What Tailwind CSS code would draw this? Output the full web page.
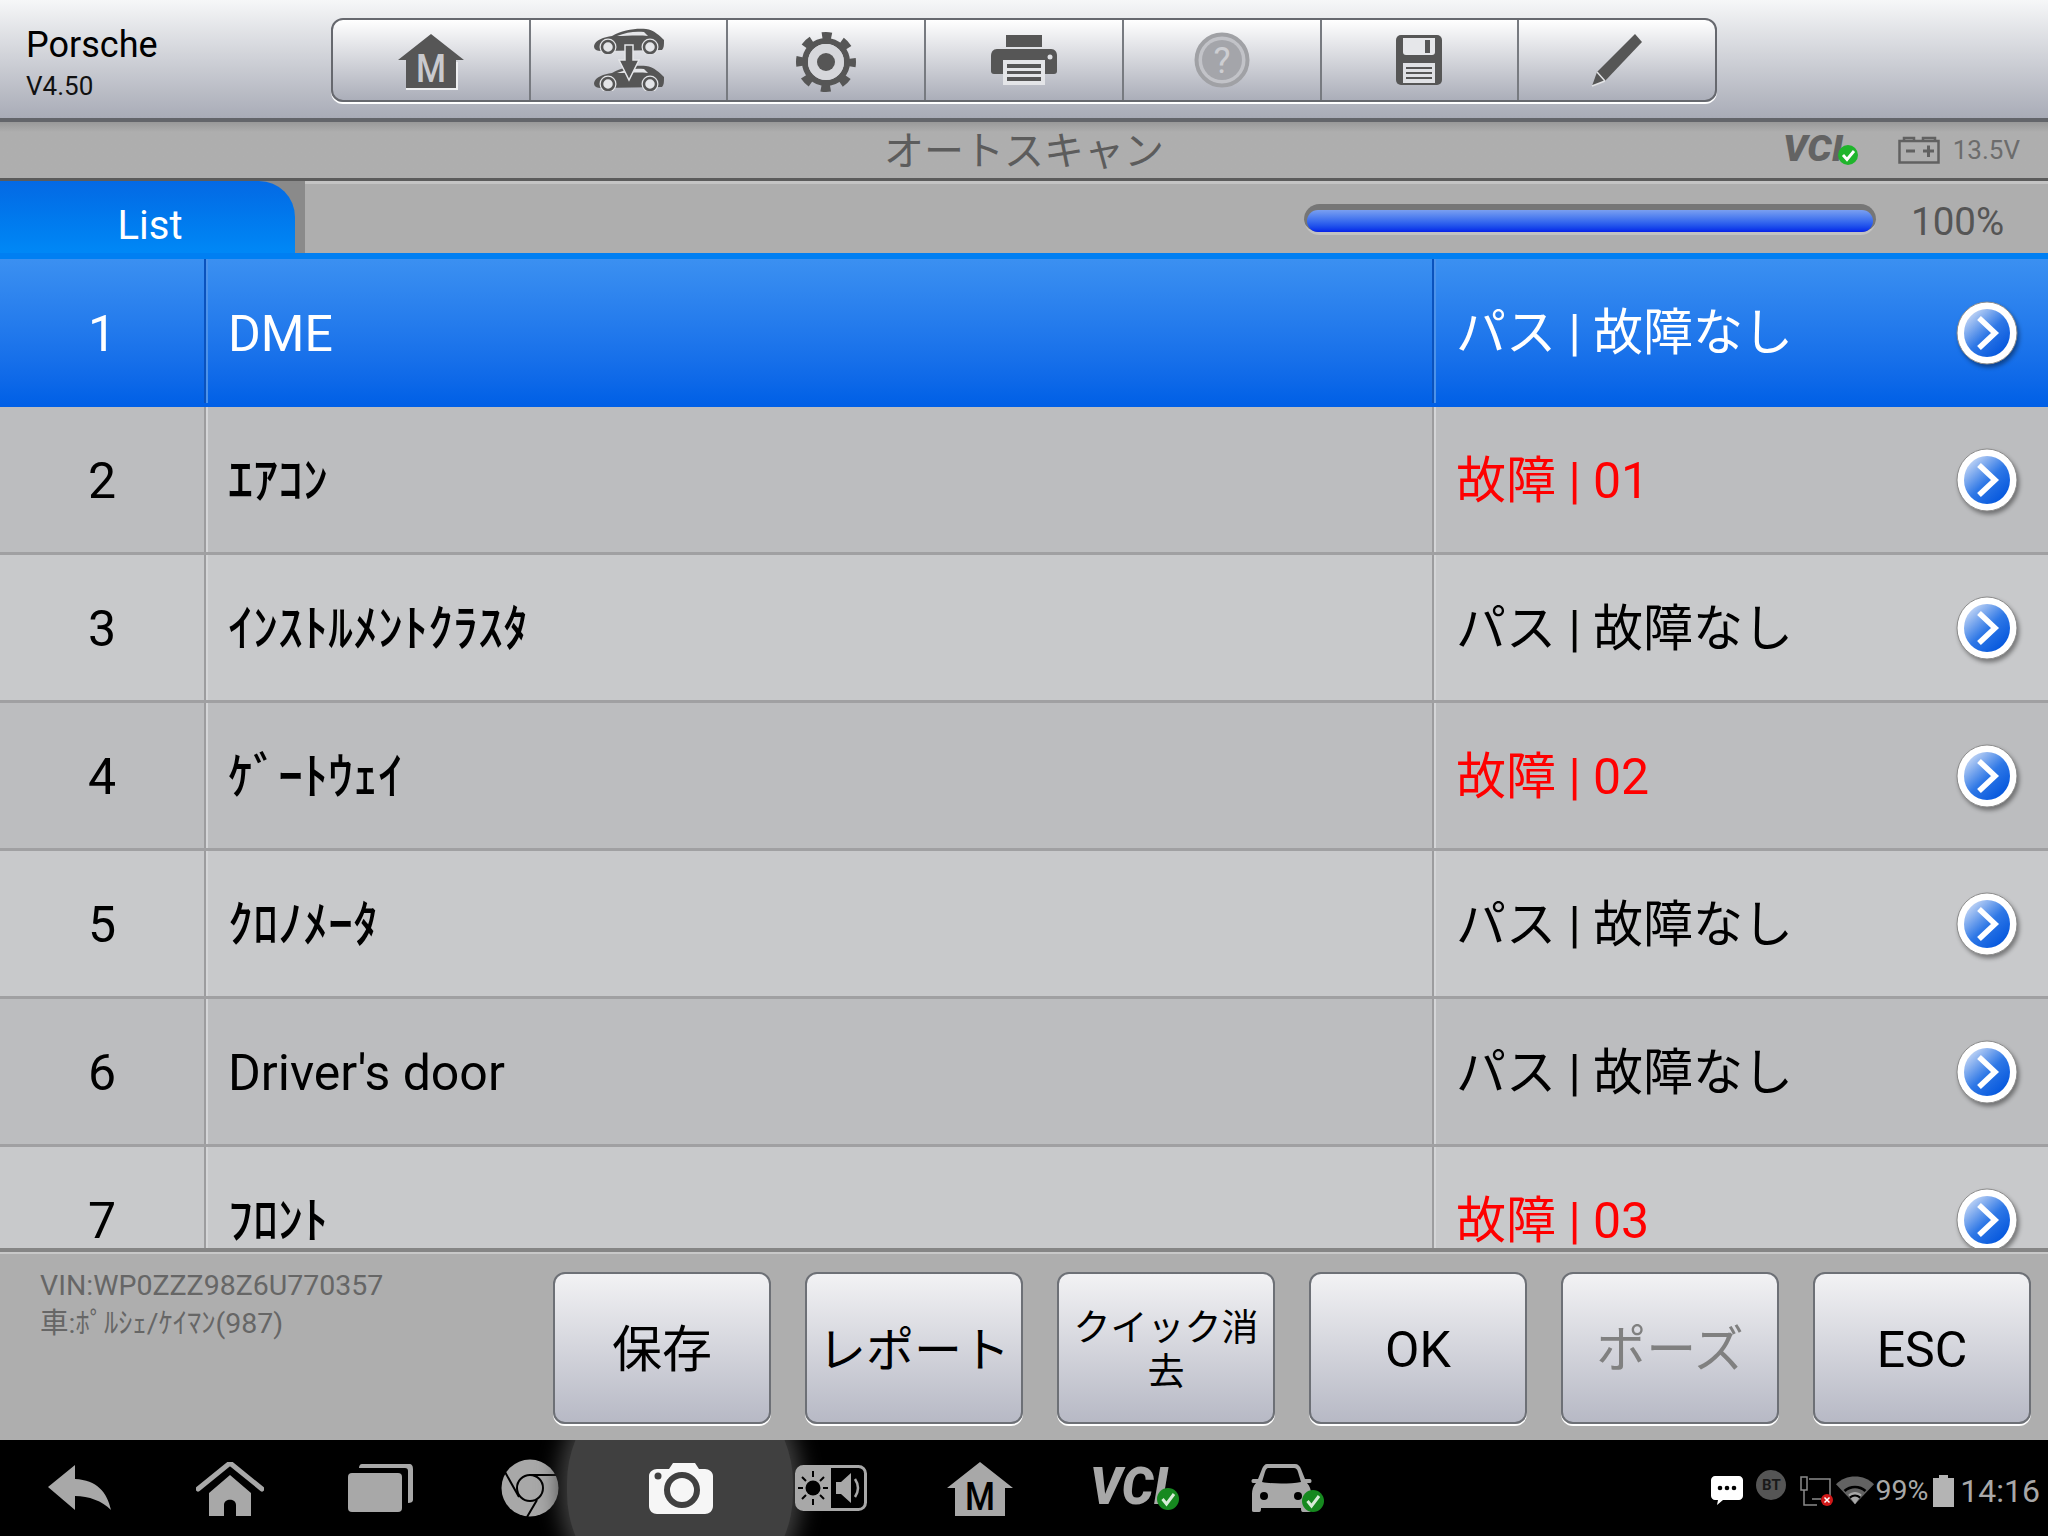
<!DOCTYPE html>
<html lang="ja">
<head>
    <meta charset="UTF-8">
    <meta name="viewport" content="width=device-width, initial-scale=1.0">
    <title>オートスキャン</title>
    <script src="https://cdn.jsdelivr.net/npm/@tailwindcss/browser@4"></script>
</head>
<body class="bg-black">
    <svg width="0" height="0" class="block h-0 w-0">
        <defs>
            <linearGradient id="chev" x1="0.1" y1="0.1" x2="0.8" y2="0.9">
                <stop offset="0" stop-color="#c6d8f6"/>
                <stop offset="0.55" stop-color="#2f78e6"/>
                <stop offset="1" stop-color="#0759de"/>
            </linearGradient>
            <symbol id="go" viewBox="0 0 62 64">
                <ellipse cx="31" cy="32" rx="30" ry="31" fill="#fff" stroke="#8a8a8a" stroke-width="1"/>
                <ellipse cx="31" cy="32" rx="23" ry="24" fill="url(#chev)"/>
                <path d="M23 17 L39 32 L23 47" fill="none" stroke="#fff" stroke-width="5.5"/>
            </symbol>
            <symbol id="minicar" viewBox="0 0 70 26">
                <path d="M0 18 C1 12 10 9 18 8 C28 2 42 0 52 1 C60 2 66 8 70 12 C70 17 70 20 68 22 L8 23 C3 23 0 22 0 18 Z" fill="#565656"/>
                <path d="M23 8 C32 4 42 3 50 4 L54 8 C44 7 32 8 23 8 Z" fill="#e4e5e8"/>
                <circle cx="14" cy="19" r="8.5" fill="#e4e5e8"/>
                <circle cx="14" cy="19" r="6" fill="#e4e5e8" stroke="#565656" stroke-width="2.5"/>
                <circle cx="56" cy="19" r="8.5" fill="#e4e5e8"/>
                <circle cx="56" cy="19" r="6" fill="#e4e5e8" stroke="#565656" stroke-width="2.5"/>
            </symbol>
        </defs>
    </svg>

    <div class="w-[2048px] h-[1536px] flex flex-col overflow-hidden font-['Roboto','Noto_Sans_CJK_JP',sans-serif]">

        <!-- Header -->
        <header class="h-[122px] shrink-0 flex bg-linear-to-b from-[#f6f7f8] to-[#a9acb7] border-b-4 border-[#63656a]">
            <div class="w-[331px] shrink-0 pl-[26px] pt-[23px]">
                <div class="text-[36px] leading-[44px] text-black">Porsche</div>
                <div class="text-[26px] leading-[38px] text-[#111]">V4.50</div>
            </div>
            <div class="mt-[18px] w-[1386px] h-[84px] flex rounded-[12px] border-2 border-[#66686e] bg-linear-to-b from-white to-[#abaeb9] shadow-[0_2px_0_#fff]">
                <div class="flex-1 flex items-center justify-center border-r-2 border-[#777a80]">
                    <svg class="mt-[4px] overflow-visible" width="66" height="56" viewBox="0 0 66 56"><path d="M33 0 L66 26 L58 26 L58 54 L8 54 L8 26 L0 26 Z" fill="#565656"/><path d="M8 54 H58 V28 H60 V56 H8 Z" fill="#eeeff1"/><text x="33" y="48" text-anchor="middle" font-family="Roboto" font-weight="500" font-size="38" textLength="30" lengthAdjust="spacingAndGlyphs" fill="#c9cace">M</text></svg>
                </div>
                <div class="flex-1 flex items-center justify-center border-r-2 border-[#777a80]">
                    <svg width="72" height="64" viewBox="0 0 72 64" fill="#565656">
                        <use href="#minicar" x="1" y="0" width="70" height="26"/>
                        <use href="#minicar" x="1" y="37" width="70" height="26"/>
                        <path d="M32 17 H40 V32 H46 L36 52 L26 32 H32 Z" stroke="#e4e5e8" stroke-width="1.5"/>
                    </svg>
                </div>
                <div class="flex-1 flex items-center justify-center border-r-2 border-[#777a80]">
                    <svg class="mt-[4px]" width="62" height="62" viewBox="0 0 62 62" fill="none">
                        <circle cx="31" cy="31" r="21" stroke="#565656" stroke-width="6"/>
                        <circle cx="31" cy="31" r="26" stroke="#565656" stroke-width="8" stroke-dasharray="9.5 10.92" stroke-dashoffset="4.75"/>
                        <circle cx="31" cy="31" r="18" fill="#d6d7db"/>
                        <circle cx="31" cy="31" r="9" fill="#565656"/>
                    </svg>
                </div>
                <div class="flex-1 flex items-center justify-center border-r-2 border-[#777a80]">
                    <svg width="68" height="52" viewBox="0 0 68 52" fill="#565656">
                        <path d="M16 1 H52 V13 H16 Z"/>
                        <path d="M7 15 H61 C65 15 67 18 67 22 V37 C67 39 66 40 64 40 H4 C2 40 1 39 1 37 V22 C1 18 3 15 7 15 Z"/>
                        <circle cx="60" cy="23" r="2.5" fill="#dfe0e4"/>
                        <path d="M13 26 H55 V51 H13 Z" fill="#e4e5e8"/>
                        <path d="M17 30 H51 V34 H17 Z M17 37 H51 V40 H17 Z M17 43 H51 V47 H17 Z"/>
                    </svg>
                </div>
                <div class="flex-1 flex items-center justify-center border-r-2 border-[#777a80]">
                    <svg class="overflow-visible" width="56" height="56" viewBox="0 0 56 56">
                        <circle cx="28" cy="28" r="25.5" fill="#c2c3c8" stroke="#a0a1a5" stroke-width="4"/>
                        <circle cx="28" cy="28" r="20" fill="#a4a5aa"/>
                        <text x="28" y="41" text-anchor="middle" font-family="Roboto" font-size="36" fill="#cdced2">?</text>
                    </svg>
                </div>
                <div class="flex-1 flex items-center justify-center border-r-2 border-[#777a80]">
                    <svg width="48" height="52" viewBox="0 0 48 52">
                        <rect x="1" y="1" width="46" height="50" rx="5" fill="#565656"/>
                        <path d="M8 4 H40 V18 C40 20 39 21 37 21 H11 C9 21 8 20 8 18 Z" fill="#e6e7ea"/>
                        <rect x="30" y="6" width="5" height="13" fill="#565656"/>
                        <rect x="8" y="29" width="32" height="20" fill="#e0e1e5"/>
                        <path d="M11 33 H37 V35 H11 Z M11 38 H37 V40 H11 Z M11 43 H37 V45 H11 Z" fill="#565656"/>
                    </svg>
                </div>
                <div class="flex-1 flex items-center justify-center">
                    <svg width="52" height="54" viewBox="0 0 52 54">
                        <path d="M44 1 L51 9 L14 48 L1 53 L6 39 Z" fill="#565656"/>
                        <path d="M6 39 L14 48 M1 53 L14 48" stroke="#e2e3e6" stroke-width="1.5"/>
                    </svg>
                </div>
            </div>
        </header>

        <!-- Title bar -->
        <div class="h-[59px] shrink-0 flex items-center pr-[28px] bg-linear-to-b from-[#999] to-[#aeaeae] to-[18%] border-b-[3px] border-[#5b5b5b]">
            <div class="w-[884px] shrink-0"></div>
            <div class="pt-[4px] text-[40px] leading-[56px] text-[#5c5c5c]">オートスキャン</div>
            <div class="flex-1"></div>
            <svg class="overflow-visible" width="74" height="30" viewBox="0 0 74 30">
                <text x="-2" y="26" font-family="Roboto" font-style="italic" font-weight="900" font-size="36" textLength="60" lengthAdjust="spacingAndGlyphs" fill="#636363">VCI</text>
                <circle cx="63" cy="20" r="10" fill="#1fb52c"/>
                <path d="M58 20 L62 24.5 L69 16" fill="none" stroke="#fff" stroke-width="2.8"/>
            </svg>
            <svg class="ml-[39px]" width="42" height="28" viewBox="0 0 42 28" fill="none" stroke="#616161" stroke-width="2.5">
                <rect x="1.5" y="5" width="39" height="21.5"/>
                <path d="M6 5 V2 H16 V5 M25 5 V2 H37 V5"/>
                <path d="M8 15 H17 M25 15 H36 M30.5 9.5 V21" stroke-width="3"/>
            </svg>
            <div class="ml-[13px] text-[26px] text-[#6c6c6c]">13.5V</div>
        </div>

        <!-- Tab row -->
        <div class="h-[78px] shrink-0 flex bg-[#aeaeae] border-b-[6px] border-[#007ff2]">
            <div class="w-[305px] shrink-0 bg-[#8a8a8a]">
                <div class="w-[295px] h-[72px] rounded-tr-[36px] bg-linear-to-b from-[#0469e4] to-[#0088f6] flex items-center justify-center pt-[18px] pl-[5px] text-[40px] text-white">List</div>
            </div>
            <div class="flex-1 border-t-[3px] border-[#c4c4c4] flex items-start pl-[999px] pt-[20px]">
                <div class="w-[572px] h-[31px] shrink-0 rounded-full bg-[#767676] border-b-[3px] border-[#c2c2c2] px-[3px] pt-[6px]">
                    <div class="h-[22px] rounded-[11px] bg-linear-to-b from-[#7a9ff0] to-[#0a1fe8]"></div>
                </div>
                <div class="ml-[35px] -mt-[4px] text-[38.5px] leading-[44px] text-[#555]">100%</div>
            </div>
        </div>

        <!-- List -->
        <main class="h-[989px] shrink-0 overflow-hidden text-[50px]">
            <div class="h-[148px] flex items-center text-white bg-linear-to-b from-[#3b90f1] to-[#005fe6]">
                <div class="w-[204px] shrink-0 pt-[3px] text-center">1</div>
                <div class="w-[4px] h-[144px] -mt-[4px] shrink-0 bg-linear-to-r from-[#0a52bd] from-50% to-[#4c92ea] to-50%"></div>
                <div class="w-[1224px] shrink-0 pt-[3px] pl-[20px]">DME</div>
                <div class="w-[4px] h-[144px] -mt-[4px] shrink-0 bg-linear-to-r from-[#0a52bd] from-50% to-[#4c92ea] to-50%"></div>
                <div class="flex-1 pt-[1px] pl-[20px]">パス | 故障なし</div>
                <svg class="mr-[30px] drop-shadow-[2px_3px_2px_rgba(0,0,0,0.4)]" width="62" height="64"><use href="#go"/></svg>
            </div>
            <div class="h-[148px] flex items-center bg-[#bcbdbf] border-b-[3px] border-[#a0a0a2] text-black">
                <div class="w-[204px] shrink-0 pt-[3px] text-center">2</div>
                <div class="w-[4px] h-full shrink-0 bg-linear-to-r from-[#9c9c9e] from-50% to-[#d4d5d7] to-50%"></div>
                <div class="w-[1224px] shrink-0 pt-[3px] pl-[20px] font-medium">ｴｱｺﾝ</div>
                <div class="w-[4px] h-full shrink-0 bg-linear-to-r from-[#9c9c9e] from-50% to-[#d4d5d7] to-50%"></div>
                <div class="flex-1 pt-[3px] pl-[20px] text-[#ff0000]">故障 | 01</div>
                <svg class="mr-[30px] drop-shadow-[2px_3px_2px_rgba(0,0,0,0.4)]" width="62" height="64"><use href="#go"/></svg>
            </div>
            <div class="h-[148px] flex items-center bg-[#c8c9cb] border-b-[3px] border-[#a0a0a2] text-black">
                <div class="w-[204px] shrink-0 pt-[3px] text-center">3</div>
                <div class="w-[4px] h-full shrink-0 bg-linear-to-r from-[#9c9c9e] from-50% to-[#d4d5d7] to-50%"></div>
                <div class="w-[1224px] shrink-0 pt-[3px] pl-[20px] font-medium">ｲﾝｽﾄﾙﾒﾝﾄｸﾗｽﾀ</div>
                <div class="w-[4px] h-full shrink-0 bg-linear-to-r from-[#9c9c9e] from-50% to-[#d4d5d7] to-50%"></div>
                <div class="flex-1 pt-[3px] pl-[20px]">パス | 故障なし</div>
                <svg class="mr-[30px] drop-shadow-[2px_3px_2px_rgba(0,0,0,0.4)]" width="62" height="64"><use href="#go"/></svg>
            </div>
            <div class="h-[148px] flex items-center bg-[#bcbdbf] border-b-[3px] border-[#a0a0a2] text-black">
                <div class="w-[204px] shrink-0 pt-[3px] text-center">4</div>
                <div class="w-[4px] h-full shrink-0 bg-linear-to-r from-[#9c9c9e] from-50% to-[#d4d5d7] to-50%"></div>
                <div class="w-[1224px] shrink-0 pt-[3px] pl-[20px] font-medium">ｹﾞｰﾄｳｪｲ</div>
                <div class="w-[4px] h-full shrink-0 bg-linear-to-r from-[#9c9c9e] from-50% to-[#d4d5d7] to-50%"></div>
                <div class="flex-1 pt-[3px] pl-[20px] text-[#ff0000]">故障 | 02</div>
                <svg class="mr-[30px] drop-shadow-[2px_3px_2px_rgba(0,0,0,0.4)]" width="62" height="64"><use href="#go"/></svg>
            </div>
            <div class="h-[148px] flex items-center bg-[#c8c9cb] border-b-[3px] border-[#a0a0a2] text-black">
                <div class="w-[204px] shrink-0 pt-[3px] text-center">5</div>
                <div class="w-[4px] h-full shrink-0 bg-linear-to-r from-[#9c9c9e] from-50% to-[#d4d5d7] to-50%"></div>
                <div class="w-[1224px] shrink-0 pt-[3px] pl-[20px] font-medium">ｸﾛﾉﾒｰﾀ</div>
                <div class="w-[4px] h-full shrink-0 bg-linear-to-r from-[#9c9c9e] from-50% to-[#d4d5d7] to-50%"></div>
                <div class="flex-1 pt-[3px] pl-[20px]">パス | 故障なし</div>
                <svg class="mr-[30px] drop-shadow-[2px_3px_2px_rgba(0,0,0,0.4)]" width="62" height="64"><use href="#go"/></svg>
            </div>
            <div class="h-[148px] flex items-center bg-[#bcbdbf] border-b-[3px] border-[#a0a0a2] text-black">
                <div class="w-[204px] shrink-0 pt-[3px] text-center">6</div>
                <div class="w-[4px] h-full shrink-0 bg-linear-to-r from-[#9c9c9e] from-50% to-[#d4d5d7] to-50%"></div>
                <div class="w-[1224px] shrink-0 pt-[3px] pl-[20px]">Driver's door</div>
                <div class="w-[4px] h-full shrink-0 bg-linear-to-r from-[#9c9c9e] from-50% to-[#d4d5d7] to-50%"></div>
                <div class="flex-1 pt-[3px] pl-[20px]">パス | 故障なし</div>
                <svg class="mr-[30px] drop-shadow-[2px_3px_2px_rgba(0,0,0,0.4)]" width="62" height="64"><use href="#go"/></svg>
            </div>
            <div class="h-[148px] flex items-center bg-[#c8c9cb] border-b-[3px] border-[#a0a0a2] text-black">
                <div class="w-[204px] shrink-0 pt-[3px] text-center">7</div>
                <div class="w-[4px] h-full shrink-0 bg-linear-to-r from-[#9c9c9e] from-50% to-[#d4d5d7] to-50%"></div>
                <div class="w-[1224px] shrink-0 pt-[3px] pl-[20px] font-medium">ﾌﾛﾝﾄ</div>
                <div class="w-[4px] h-full shrink-0 bg-linear-to-r from-[#9c9c9e] from-50% to-[#d4d5d7] to-50%"></div>
                <div class="flex-1 pt-[3px] pl-[20px] text-[#ff0000]">故障 | 03</div>
                <svg class="mr-[30px] drop-shadow-[2px_3px_2px_rgba(0,0,0,0.4)]" width="62" height="64"><use href="#go"/></svg>
            </div>
        </main>

        <!-- Footer -->
        <div class="h-[192px] shrink-0 flex bg-[#aeaeae] border-t-4 border-[#858585]">
            <div class="w-[553px] shrink-0 border-t-2 border-[#c8c8c8] pl-[40px] pt-[13px] text-[#666]">
                <div class="text-[28.5px] leading-[38px]">VIN:WP0ZZZ98Z6U770357</div>
                <div class="text-[28.5px] leading-[38px]">車:ﾎﾟﾙｼｪ/ｹｲﾏﾝ(987)</div>
            </div>
            <div class="flex-1 border-t-2 border-[#c8c8c8] pt-[18px] flex gap-[34px]">
                <button class="w-[218px] h-[152px] pt-[5px] rounded-[12px] border-2 border-[#6d7076] bg-linear-to-b from-[#f2f2f4] to-[#b7b9c5] shadow-[0_2px_0_#fff] text-[50px] text-black">保存</button>
                <button class="w-[218px] h-[152px] pt-[5px] rounded-[12px] border-2 border-[#6d7076] bg-linear-to-b from-[#f2f2f4] to-[#b7b9c5] shadow-[0_2px_0_#fff] text-[48px] text-black">レポート</button>
                <button class="w-[218px] h-[152px] pt-[6px] rounded-[12px] border-2 border-[#6d7076] bg-linear-to-b from-[#f2f2f4] to-[#b7b9c5] shadow-[0_2px_0_#fff] text-[37px] leading-[44px] text-black px-[14px]">クイック消去</button>
                <button class="w-[218px] h-[152px] pt-[5px] rounded-[12px] border-2 border-[#6d7076] bg-linear-to-b from-[#f2f2f4] to-[#b7b9c5] shadow-[0_2px_0_#fff] text-[50px] text-black">OK</button>
                <button class="w-[218px] h-[152px] pt-[5px] rounded-[12px] border-2 border-[#6d7076] bg-linear-to-b from-[#f2f2f4] to-[#b7b9c5] shadow-[0_2px_0_#fff] text-[50px] text-[#808080]">ポーズ</button>
                <button class="w-[218px] h-[152px] pt-[5px] rounded-[12px] border-2 border-[#6d7076] bg-linear-to-b from-[#f2f2f4] to-[#b7b9c5] shadow-[0_2px_0_#fff] text-[50px] text-black">ESC</button>
            </div>
        </div>

        <!-- Android nav bar -->
        <nav class="h-[96px] shrink-0 flex items-center bg-black pl-[5px] overflow-hidden">
            <div class="w-[150px] flex justify-center">
                <svg width="66" height="48" viewBox="0 0 66 48" fill="#a8a8a8"><path d="M1 23 L28 1 V15 C50 16 60 28 64 46 C55 37 42 32 28 32 V46 Z"/></svg>
            </div>
            <div class="w-[150px] flex justify-center">
                <svg class="mt-[2px]" width="68" height="54" viewBox="0 0 68 54" fill="#a8a8a8"><path d="M2 27 L34 1 L66 27" fill="none" stroke="#a8a8a8" stroke-width="5" stroke-linecap="round" stroke-linejoin="round"/><path d="M34 13 L55 31 V54 H40 V43 C40 36 28 36 28 43 V54 H13 V31 Z"/></svg>
            </div>
            <div class="w-[150px] flex justify-center">
                <svg class="ml-[2px]" width="66" height="48" viewBox="0 0 66 48" fill="#a8a8a8"><path d="M11 4 C11 2 12 0 14 0 H61 C64 0 65 2 65 5 V36 C65 38 63 39 60 39 V7 C60 5 59 4 57 4 Z"/><rect x="0" y="9" width="54" height="39" rx="4"/></svg>
            </div>
            <div class="w-[150px] flex justify-center">
                <svg width="58" height="58" viewBox="0 0 58 58">
                    <circle cx="29" cy="29" r="28.5" fill="#a8a8a8"/>
                    <circle cx="29" cy="29" r="13" fill="#a8a8a8" stroke="#000" stroke-width="2"/>
                    <path d="M28 16 H57 M4 13 L18 38 M36 41 L26 58" stroke="#000" stroke-width="2" fill="none"/>
                </svg>
            </div>
            <div class="w-[150px] h-[96px] flex items-center justify-center relative">
                <div class="absolute left-[-38px] top-[-70px] w-[226px] h-[236px] rounded-full bg-[#404040] shadow-[0_0_22px_8px_#404040]"></div>
                <svg class="relative ml-[2px]" width="64" height="52" viewBox="0 0 64 52">
                    <path d="M8 7 H20 L24 1 H46 L50 7 H56 C60 7 64 10 64 14 V44 C64 49 60 52 56 52 H8 C4 52 0 49 0 44 V14 C0 10 4 7 8 7 Z" fill="#f6f6f6"/>
                    <circle cx="33" cy="28" r="15" fill="#f6f6f6" stroke="#404040" stroke-width="6"/>
                    <circle cx="9" cy="14" r="3.5" fill="#404040"/>
                </svg>
            </div>
            <div class="w-[150px] flex justify-center relative">
                <svg class="ml-[2px]" width="72" height="46" viewBox="0 0 72 46">
                    <rect x="1.5" y="1.5" width="69" height="43" rx="7" fill="#000" stroke="#a8a8a8" stroke-width="3"/>
                    <path d="M8 1.5 H36 V44.5 H8 C4 44.5 1.5 42 1.5 38 V8 C1.5 4 4 1.5 8 1.5 Z" fill="#a8a8a8"/>
                    <circle cx="18" cy="23" r="7.5" fill="#000"/>
                    <path d="M18 6 V12 M18 34 V40 M3 23 H8 M28 23 H33 M7 12 L11 16 M29 12 L25 16 M7 34 L11 30 M29 34 L25 30" stroke="#000" stroke-width="2"/>
                    <path d="M41 17 H46 L56 8 V38 L46 29 H41 Z" fill="#a8a8a8"/>
                    <path d="M60 14 C64 20 64 26 60 32" fill="none" stroke="#a8a8a8" stroke-width="2.5"/>
                </svg>
            </div>
            <div class="w-[150px] flex justify-center">
                <svg class="mt-[1px] overflow-visible" width="66" height="54" viewBox="0 0 66 54"><path d="M33 0 L66 26 L58 26 L58 54 L8 54 L8 26 L0 26 Z" fill="#a8a8a8"/><text x="33" y="48" text-anchor="middle" font-family="Roboto" font-weight="500" font-size="38" textLength="30" lengthAdjust="spacingAndGlyphs" fill="#000">M</text></svg>
            </div>
            <div class="w-[150px] flex justify-center">
                <svg class="ml-[14px] overflow-visible" width="90" height="52" viewBox="0 0 90 52">
                    <text x="-2" y="42" font-family="Roboto" font-style="italic" font-weight="900" font-size="52" textLength="78" lengthAdjust="spacingAndGlyphs" fill="#a8a8a8">VCI</text>
                    <circle cx="76" cy="37" r="11" fill="#16891f"/>
                    <path d="M70.5 37 L74.5 42 L82 32" fill="none" stroke="#d8ecd8" stroke-width="3"/>
                </svg>
            </div>
            <div class="w-[150px] flex justify-center">
                <svg class="ml-[15px]" width="75" height="48" viewBox="0 0 75 48" fill="#a8a8a8">
                    <path d="M17 0 H45 C48 0 50 2 51 5 L55 15 H60 C62 15 62 19 60 19 H57 C60 22 61 26 61 30 V46 C61 48 60 48 58 48 H53 C51 48 51 46 51 44 H11 C11 46 11 48 9 48 H4 C2 48 2 47 2 46 V30 C2 26 3 22 6 19 H3 C1 19 1 15 3 15 H8 L12 5 C13 2 15 0 17 0 Z"/>
                    <path d="M18 4 H44 C46 4 47 5 48 8 L51 18 C40 20 22 20 12 18 L15 8 C16 5 17 4 18 4 Z" fill="#000"/>
                    <circle cx="14" cy="32" r="4" fill="#000"/>
                    <circle cx="48" cy="32" r="4" fill="#000"/>
                    <circle cx="63" cy="37" r="11" fill="#16891f"/>
                    <path d="M57.5 37 L61.5 42 L69 32" fill="none" stroke="#d8ecd8" stroke-width="3"/>
                </svg>
            </div>
            <div class="flex-1"></div>
            <div class="flex items-center pr-[8px] text-[#a8a8a8]">
                <svg class="mt-[6px]" width="32" height="30" viewBox="0 0 32 30" fill="#fff"><path d="M4 0 H28 C30 0 32 2 32 4 V20 C32 22 30 24 28 24 H12 L6 29 L7 24 H4 C2 24 0 22 0 20 V4 C0 2 2 0 4 0 Z"/><circle cx="9" cy="12" r="2.3" fill="#000"/><circle cx="16" cy="12" r="2.3" fill="#000"/><circle cx="23" cy="12" r="2.3" fill="#000"/></svg>
                <div class="ml-[13px] -mt-[6px] w-[30px] h-[30px] rounded-full bg-[#555] flex items-center justify-center text-[15px] font-bold text-[#1a1a1a]">BT</div>
                <svg class="ml-[13px] mt-[6px]" width="36" height="30" viewBox="0 0 36 30" fill="none" stroke="#8a8a8a" stroke-width="1.5"><rect x="2" y="1" width="6" height="13"/><path d="M5 14 V29 H18 M10 3 H31 V20 M13 23 H22"/><circle cx="28" cy="24" r="6" fill="#d01818" stroke="none"/><path d="M25.5 21.5 L30.5 26.5 M30.5 21.5 L25.5 26.5" stroke="#fff"/></svg>
                <svg class="ml-[1px] mt-[4px]" width="38" height="30" viewBox="0 0 40 30"><path d="M0 9 C10 -2 30 -2 40 9 L20 30 Z" fill="#626262"/><path d="M8 15 C14 9 26 9 32 15 L30 17 C24 12 16 12 10 17 Z" fill="#000"/><path d="M13 20 C17 16 23 16 27 20 L20 30 Z" fill="#a8a8a8"/><path d="M14 22 C18 19 22 19 26 22 L25 24 C21 21 19 21 15 24 Z" fill="#000"/></svg>
                <div class="text-[28.5px] ml-[1px] mt-[6px]">99%</div>
                <svg class="ml-[5px] mt-[6px]" width="21" height="32" viewBox="0 0 21 32" fill="#b4b4b4"><path d="M6 0 H15 V3 H21 V32 H0 V3 H6 Z"/></svg>
                <div class="text-[32px] ml-[6px] mt-[6px]">14:16</div>
            </div>
        </nav>
    </div>
</body>
</html>
